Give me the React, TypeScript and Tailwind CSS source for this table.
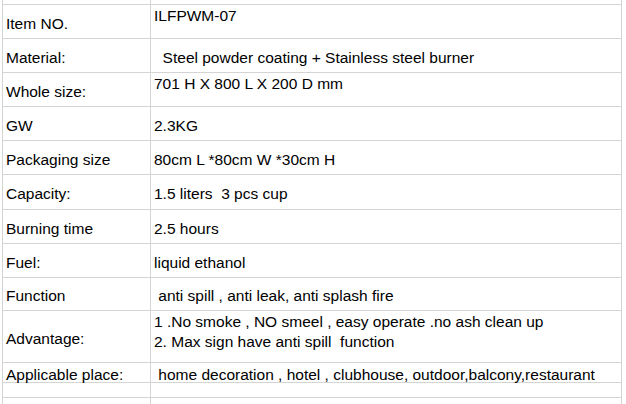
const rows: { label: string; value: string[]; h: string; top?: boolean }[] = [
  { label: "Item NO.", value: ["ILFPWM-07"], h: "h-[34px]", top: true },
  { label: "Material:", value: ["  Steel powder coating + Stainless steel burner"], h: "h-[34px]" },
  { label: "Whole size:", value: ["701 H X 800 L X 200 D mm"], h: "h-[34px]", top: true },
  { label: "GW", value: ["2.3KG"], h: "h-[34px]" },
  { label: "Packaging size", value: ["80cm L *80cm W *30cm H"], h: "h-[34px]" },
  { label: "Capacity:", value: ["1.5 liters  3 pcs cup"], h: "h-[35px]" },
  { label: "Burning time", value: ["2.5 hours"], h: "h-[34px]" },
  { label: "Fuel:", value: ["liquid ethanol"], h: "h-[34px]" },
  { label: "Function", value: [" anti spill , anti leak, anti splash fire"], h: "h-[33px]" },
  {
    label: "Advantage:",
    value: ["1 .No smoke , NO smeel , easy operate .no ash clean up", "2. Max sign have anti spill  function"],
    h: "h-[52px]",
    top: true,
  },
  { label: "Applicable place:", value: [" home decoration , hotel , clubhouse, outdoor,balcony,restaurant"], h: "h-[20px]" },
];

export default function App() {
  return (
    <div className="w-[626px] h-[404px] overflow-hidden bg-white font-['Liberation_Sans',Arial,sans-serif] text-[15.5px] leading-[20px] text-black">
      <div className="ml-[2px] w-[620px] border-x border-[#d4d4d4]">
        <div className="flex h-[4px]">
          <div className="w-[148px] border-r border-[#d4d4d4]" />
        </div>
        {rows.map((r) => (
          <div key={r.label} className={`flex border-t border-[#d4d4d4] ${r.h}`}>
            <div className="w-[148px] shrink-0 border-r border-[#d4d4d4] flex items-center pl-[3px] pt-[4px] whitespace-pre">
              {r.label}
            </div>
            <div
              className={
                r.top
                  ? "flex-1 flex flex-col pl-[3px] pt-[1px] whitespace-pre"
                  : "flex-1 flex items-center pl-[3px] pt-[4px] whitespace-pre"
              }
            >
              {r.value.map((v, i) => (
                <div key={i}>{v}</div>
              ))}
            </div>
          </div>
        ))}
        <div className="flex h-[15px] border-t border-[#d4d4d4]">
          <div className="w-[148px] border-r border-[#d4d4d4]" />
        </div>
        <div className="flex h-[20px] border-t border-[#d4d4d4]">
          <div className="w-[148px] border-r border-[#d4d4d4]" />
        </div>
      </div>
    </div>
  );
}
